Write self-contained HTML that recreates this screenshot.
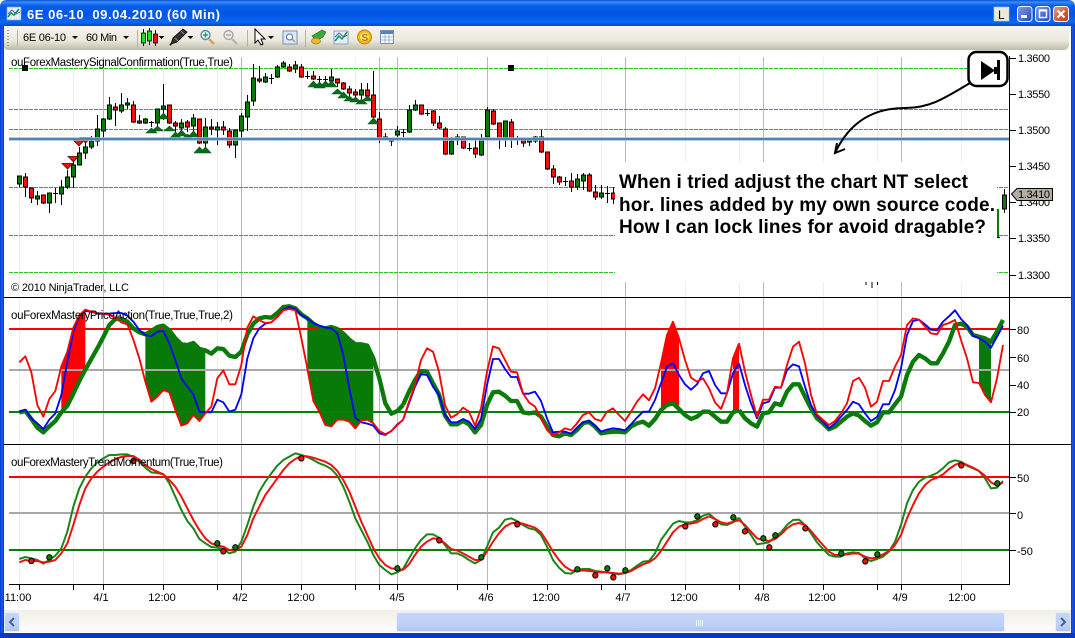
<!DOCTYPE html>
<html><head><meta charset="utf-8"><title>6E 06-10</title>
<style>html,body{margin:0;padding:0;background:#fff;width:1075px;height:638px;overflow:hidden}svg{display:block}
text{font-family:"Liberation Sans",Arial,sans-serif;font-size:11px;fill:#000}</style></head><body>
<svg width="1075" height="638" viewBox="0 0 1075 638" xmlns="http://www.w3.org/2000/svg">
<defs>
<linearGradient id="tb" x1="0" y1="0" x2="0" y2="1"><stop offset="0" stop-color="#0a50d0"/><stop offset=".08" stop-color="#3a8cf8"/><stop offset=".2" stop-color="#0a60ea"/><stop offset=".55" stop-color="#0055e5"/><stop offset=".85" stop-color="#0a68f4"/><stop offset="1" stop-color="#0046c8"/></linearGradient>
<linearGradient id="tl" x1="0" y1="0" x2="0" y2="1"><stop offset="0" stop-color="#f6f5ef"/><stop offset=".6" stop-color="#ebe9dd"/><stop offset="1" stop-color="#bfbcaa"/></linearGradient>
<linearGradient id="th" x1="0" y1="0" x2="0" y2="1"><stop offset="0" stop-color="#c6d6fa"/><stop offset=".7" stop-color="#bdd0f8"/><stop offset="1" stop-color="#a9c4f4"/></linearGradient>
<linearGradient id="sb" x1="0" y1="0" x2="0" y2="1"><stop offset="0" stop-color="#f1efe8"/><stop offset="1" stop-color="#fdfdfb"/></linearGradient>
<linearGradient id="wb" x1="0" y1="0" x2="1" y2="1"><stop offset="0" stop-color="#7f9ff0"/><stop offset="1" stop-color="#2447c0"/></linearGradient>
<linearGradient id="cl" x1="0" y1="0" x2="1" y2="1"><stop offset="0" stop-color="#eb9a80"/><stop offset="1" stop-color="#c0300c"/></linearGradient>
</defs>
<rect width="1075" height="638" fill="#fff"/>
<!-- window frame -->
<path d="M0 26V7Q0 0 7 0H1068Q1075 0 1075 7V26z" fill="url(#tb)"/>
<rect x="0" y="26" width="4" height="612" fill="#0b3fdc"/><rect x="1" y="26" width="2" height="612" fill="#1652ea"/>
<rect x="1071" y="26" width="4" height="612" fill="#0b3fdc"/><rect x="1072" y="26" width="2" height="612" fill="#1652ea"/>
<rect x="0" y="633" width="1075" height="5" fill="#0a37c4"/>
<!-- title -->
<rect x="7" y="7" width="14" height="13" fill="#e6eefc" stroke="#8aa2c8" stroke-width=".7"/>
<path d="M8 17L11 13L14 15L19 9" fill="none" stroke="#1c9a3c" stroke-width="1.6"/><path d="M8 14L12 10L16 14L20 12" fill="none" stroke="#3060c0" stroke-width=".9"/>
<text x="27" y="19" textLength="193" style="font-size:13px;font-weight:bold;fill:#fff" xml:space="preserve">6E 06-10  09.04.2010 (60 Min)</text>
<rect x="994" y="7" width="15" height="14" fill="#ece9d8" stroke="#b8c6e8" stroke-width=".6"/><text x="998" y="19" style="font-size:12px">L</text>
<rect x="1017.5" y="6.5" width="14.5" height="15" rx="3" fill="url(#wb)" stroke="#fff"/><rect x="1021" y="15" width="6" height="3" fill="#fff"/>
<rect x="1035.5" y="6.5" width="14.5" height="15" rx="3" fill="url(#wb)" stroke="#fff"/><rect x="1039.5" y="10" width="7" height="7.5" fill="none" stroke="#fff" stroke-width="1.4"/><rect x="1039" y="9.5" width="8" height="2" fill="#fff"/>
<rect x="1053.5" y="6.5" width="15" height="15" rx="3" fill="url(#cl)" stroke="#fff"/><path d="M1057.5 10.5l7 7m0-7l-7 7" stroke="#fff" stroke-width="2"/>
<!-- toolbar -->
<path d="M4 26H1069V44Q1069 50 1063 50H8Q4 50 4 46z" fill="url(#tl)"/>
<path d="M8 30v1m0 2v1m0 2v1m0 2v1m0 2v1m0 2v1" stroke="#a8a594" stroke-width="2"/>
<path d="M17.5 30V47M137.5 30V47M247.5 30V47M305.5 30V47" stroke="#b5b2a2"/>
<text x="23" y="41" textLength="43">6E 06-10</text>
<text x="86" y="41" textLength="31">60 Min</text>
<path d="M72 36h6l-3 3zM123 36h6l-3 3zM158.500 36h6l-3 3zM187.500 36h6l-3 3zM268 36h6l-3 3z" fill="#000"/>
<!-- candle icon -->
<path d="M143.500 29V46M149.500 28V45M155.500 30V46" stroke="#000"/>
<rect x="141.500" y="33" width="4" height="10" fill="#1ee01e" stroke="#000" stroke-width=".8"/><rect x="147.500" y="31" width="4" height="10" fill="#1ee01e" stroke="#000" stroke-width=".8"/><rect x="153.500" y="34" width="4" height="9" fill="#e81010" stroke="#000" stroke-width=".8"/>
<!-- pencil -->
<path d="M171 44L173 38L183 29L187 32L177 42z" fill="#333" stroke="#000" stroke-width=".8"/><path d="M175 38l3 3M181 31l3 3" stroke="#888"/><path d="M171 44l-1 1" stroke="#000" stroke-width="2"/>
<!-- zoom in / out -->
<circle cx="205.500" cy="35" r="4.500" fill="#dff0fa" stroke="#5a8ab0" stroke-width="1.400"/><path d="M203 35h5M205.500 32.500v5" stroke="#1a9a3a" stroke-width="1.300"/><path d="M209 39l5 5" stroke="#d8a050" stroke-width="2.500"/>
<circle cx="228.500" cy="35" r="4.500" fill="#e8e8e4" stroke="#a8a8a4" stroke-width="1.400"/><path d="M226 35h5" stroke="#a0a0a0" stroke-width="1.300"/><path d="M232 39l5 5" stroke="#b8b8b0" stroke-width="2.500"/>
<!-- cursor -->
<path d="M255 29V43L258 40L261 45L263 44L261 39H265z" fill="#fff" stroke="#000" stroke-width="1"/>
<!-- props -->
<rect x="283" y="31" width="14" height="13" fill="#dce8f8" stroke="#6f8fc0"/><circle cx="289.500" cy="37" r="3" fill="#fff" stroke="#4a6fa8"/><path d="M292 39l3 3" stroke="#d09040" stroke-width="1.500"/>
<!-- money -->
<path d="M312 36L322 30L326 32L323 37L316 41z" fill="#3aa83a" stroke="#1a6a1a" stroke-width=".6"/><ellipse cx="316" cy="41" rx="4.500" ry="3" fill="#e8b830" stroke="#a07810" stroke-width=".7"/>
<!-- chart -->
<rect x="334" y="31" width="14" height="13" fill="#e6eefc" stroke="#8aa2c8"/><path d="M335 41L339 36L342 39L347 32" fill="none" stroke="#1c9a3c" stroke-width="1.500"/><path d="M335 37L339 33L344 37L347 35" fill="none" stroke="#3060c0"/>
<!-- coin -->
<circle cx="364.500" cy="37" r="7" fill="#f0b818" stroke="#c08a08"/><circle cx="364.500" cy="37" r="4.500" fill="#fbe080"/><text x="361.500" y="41" style="font-size:10px;font-weight:bold;fill:#b07808">S</text>
<!-- table -->
<rect x="380.500" y="30.500" width="13" height="13" fill="#fff" stroke="#6f8fc0"/><rect x="381" y="31" width="12" height="3" fill="#5a80c8"/><path d="M381 37h12M381 40h12M385 34v9M389 34v9" stroke="#8aa2c8" stroke-width=".8"/>

<!-- gridlines -->
<g id="grid">
<path d="M19.500 57V584M73.500 57V584M163.500 57V584M217.500 57V584M301.500 57V584M355.500 57V584M457.500 57V584M547.500 57V584M601.500 57V584M685.500 57V584M739.500 57V584M823.500 57V584M877.500 57V584M961.500 57V584" stroke="#efeee6"/>
<path d="M103.500 57V584M241.500 57V584M379.500 57V584M397.500 57V584M487.500 57V584M625.500 57V584M763.500 57V584M901.500 57V584" stroke="#b8b8b8"/>
</g>
<!-- pane 1 lines -->
<path d="M9 68.500H1009M9 272.500H1009" stroke="#22c822" stroke-dasharray="4 1"/>
<path d="M9 109.500H1009M9 129.500H1009M9 187.500H1009M9 235.500H1009" stroke="#3c9c50" stroke-dasharray="4 1"/>
<!-- wicks -->
<path stroke="#000" fill="none" d="M19.500 176V187M25.500 173V197M31.500 188V203M37.500 191V205M43.500 195V204M49.500 193V213M55.500 188V203M61.500 180V205M67.500 170V189M73.500 160V188M79.500 147V165M85.500 140V159M91.500 136V149M97.500 115V146M103.500 118V139M109.500 97V120M115.500 103V126M121.500 93V113M127.500 98V109M133.500 101V123M139.500 115V124M145.500 118V124M151.500 121V127M157.500 109V130M163.500 84V120M169.500 105V124M175.500 121V132M181.500 119V135M187.500 120V132M193.500 114V135M199.500 119V144M205.500 118V147M211.500 119V135M217.500 122V145M223.500 121V135M229.500 128V148M235.500 130V158M241.500 113V138M247.500 95V131M253.500 64V106M259.500 66V83M265.500 73V83M271.500 74V84M277.500 65V78M283.500 61V68M289.500 64V72M295.500 61V73M301.500 64V78M307.500 71V79M313.500 71V80M319.500 76V83M325.500 76V85M331.500 69V82M337.500 79V87M343.500 82V90M349.500 86V97M355.500 89V98M361.500 83V100M367.500 83V100M373.500 71V118M379.500 112V143M385.500 133V140M391.500 138V146M397.500 126V137M403.500 129V137M409.500 105V133M415.500 100V111M421.500 105V115M427.500 109V116M433.500 110V126M439.500 116V129M445.500 127V155M451.500 137V155M457.500 134V145M463.500 137V149M469.500 143V151M475.500 139V158M481.500 134V156M487.500 107V138M493.500 109V125M499.500 123V149M505.500 121V147M511.500 119V148M517.500 136V145M523.500 140V147M529.500 139V146M535.500 136V143M541.500 130V153M547.500 152V170M553.500 165V184M559.500 176V185M565.500 177V186M571.500 173V192M577.500 174V190M583.500 173V190M589.500 173V192M595.500 185V200M601.500 185V199M607.500 186V203M613.500 187V204M1004.500 189V213"/>
<!-- dojis -->
<path stroke="#000" fill="none" d="M53 193.500h5M149 122.500h5M269 78.500h5M305 76.500h5M317 79.500h5M323 79.500h5M401 132.500h5M425 113.500h5M467 148.500h5M515 139.500h5M563 181.500h5M605 193.500h5"/>
<!-- green bodies -->
<path stroke="#000" fill="#0a7a0a" d="M17.500 176h4v8h-4zM35.500 196h4v3h-4zM47.500 193h4v10h-4zM59.500 187h4v7h-4zM65.500 177h4v10h-4zM71.500 165h4v12h-4zM77.500 153h4v12h-4zM83.500 147h4v6h-4zM89.500 141h4v6h-4zM95.500 129h4v12h-4zM101.500 119h4v12h-4zM107.500 105h4v14h-4zM119.500 105h4v6h-4zM125.500 103h4v2h-4zM143.500 119h4v4h-4zM155.500 109h4v14h-4zM161.500 106h4v3h-4zM179.500 123h4v5h-4zM191.500 118h4v8h-4zM203.500 127h4v16h-4zM215.500 127h4v3h-4zM233.500 130h4v15h-4zM239.500 116h4v15h-4zM245.500 102h4v15h-4zM251.500 78h4v23h-4zM263.500 77h4v5h-4zM275.500 67h4v10h-4zM281.500 63h4v4h-4zM293.500 65h4v4h-4zM329.500 77h4v4h-4zM359.500 90h4v5h-4zM383.500 137h4v2h-4zM395.500 131h4v4h-4zM407.500 110h4v22h-4zM413.500 105h4v5h-4zM449.500 141h4v13h-4zM455.500 137h4v3h-4zM479.500 139h4v16h-4zM485.500 110h4v27h-4zM503.500 121h4v17h-4zM527.500 139h4v3h-4zM533.500 137h4v4h-4zM575.500 179h4v8h-4zM581.500 175h4v6h-4zM599.500 193h4v4h-4zM1002.500 195h4v14h-4z"/>
<!-- red bodies -->
<path stroke="#000" fill="#f01010" d="M23.500 177h4v10h-4zM29.500 188h4v10h-4zM41.500 195h4v8h-4zM113.500 107h4v3h-4zM131.500 105h4v17h-4zM137.500 121h4v2h-4zM167.500 105h4v18h-4zM173.500 123h4v3h-4zM185.500 122h4v5h-4zM197.500 119h4v24h-4zM209.500 127h4v2h-4zM221.500 127h4v3h-4zM227.500 131h4v14h-4zM257.500 79h4v2h-4zM287.500 67h4v4h-4zM299.500 67h4v10h-4zM311.500 76h4v3h-4zM335.500 79h4v4h-4zM341.500 83h4v6h-4zM347.500 89h4v4h-4zM353.500 92h4v3h-4zM365.500 90h4v6h-4zM371.500 95h4v22h-4zM377.500 119h4v19h-4zM389.500 139h4v2h-4zM419.500 105h4v9h-4zM431.500 111h4v12h-4zM437.500 123h4v5h-4zM443.500 129h4v25h-4zM461.500 137h4v11h-4zM473.500 148h4v6h-4zM491.500 111h4v13h-4zM497.500 123h4v16h-4zM509.500 122h4v16h-4zM521.500 140h4v3h-4zM539.500 137h4v15h-4zM545.500 152h4v17h-4zM551.500 169h4v8h-4zM557.500 177h4v5h-4zM569.500 181h4v6h-4zM587.500 175h4v16h-4zM593.500 192h4v5h-4zM611.500 193h4v6h-4z"/>
<!-- triangles -->
<path fill="#0a6e0a" stroke="#053" stroke-width=".6" d="M146 133L151.500 128L157 133zM152 131L157.500 126L163 131zM158 119L163.500 113L169 119zM164 131L169.500 126L175 131zM170 138L175.500 132L181 138zM176 136L181.500 130L187 136zM182 139L187.500 134L193 139zM188 137L193.500 131L199 137zM194 153L199.500 147L205 153zM200 153L205.500 147L211 153zM308 87L313.500 81L319 87zM314 88L319.500 82L325 88zM320 87L325.500 81L331 87zM326 87L331.500 81L337 87zM332 94L337.500 89L343 94zM338 98L343.500 92L349 98zM344 101L349.500 96L355 101zM350 102L355.500 97L361 102zM356 104L361.500 99L367 104zM362 101L367.500 96L373 101zM368 124L373.500 118L379 124z"/>
<path fill="#f01010" stroke="#300" stroke-width=".7" d="M73.500 140.500H84L79 146zM80 137.500H91L85.500 143zM68 156.500H78.500L73.500 162zM62 163.500H73L67.500 169z"/>
<rect x="22" y="65" width="6" height="6" fill="#000"/><rect x="508" y="65" width="6" height="6" fill="#000"/>
<!-- blue line -->
<rect x="9" y="137" width="1000" height="4" fill="#a6c2de" opacity=".75"/><rect x="9" y="138" width="1000" height="2" fill="#4a80b4" opacity=".95"/>
<!-- white box -->
<rect x="615" y="162" width="382" height="120" fill="#fff"/>
<path d="M866 282v3M872 282v6M877.500 282v3" stroke="#000"/>
<rect x="997" y="209" width="2" height="28" fill="#0a7a0a"/><path d="M997 237.500h3" stroke="#000"/>
<text x="619" y="188" textLength="349" style="font-size:19px;font-weight:bold">When i tried adjust the chart NT select</text>
<text x="619" y="211" textLength="376" style="font-size:19px;font-weight:bold">hor. lines added by my own source code.</text>
<text x="619" y="233" textLength="367" style="font-size:19px;font-weight:bold">How I can lock lines for avoid dragable?</text>
<!-- annotation -->
<path d="M970 83C945 98 930 108 905 108C870 108 848 125 835 153" fill="none" stroke="#000" stroke-width="2"/>
<path d="M837 143L835 153L845 149" fill="none" stroke="#000" stroke-width="2"/>
<rect x="968.500" y="52" width="39" height="34" rx="8" fill="#fff" stroke="#000" stroke-width="2.500"/>
<path d="M981 61V80L995 70.500z" fill="#000"/><rect x="994" y="67" width="3" height="7" fill="#000"/><rect x="997" y="60" width="3" height="20" fill="#000"/>

<!-- pane 2 fills -->
<g transform="translate(0 295) scale(.33333)" stroke-linejoin="round" fill="none">
<polygon fill="#f00" points="184,214 202,170 220,98 238,60 256,44 256,224 238,258 220,296 202,332 184,352"/>
<polygon fill="#077a07" points="436,118 454,108 472,96 490,92 508,106 526,130 544,148 562,150 580,144 598,162 616,166 616,355 598,378 580,360 562,385 544,392 526,345 508,292 490,285 472,305 454,320 436,260"/>
<polygon fill="#077a07" points="922,70 940,86 958,96 976,100 994,96 1012,102 1030,116 1048,134 1066,148 1084,148 1102,152 1120,190 1120,385 1102,374 1084,376 1066,400 1048,380 1030,374 1012,374 994,394 976,390 958,350 940,318 922,220"/>
</g>
<g transform="translate(400 295) scale(.33333)">
<polygon fill="#f00" points="783,205 801,120 819,78 837,130 837,342 819,325 801,330 783,345"/>
<polygon fill="#f00" points="999,190 1017,145 1017,345 999,352"/>
</g>
<g transform="translate(740 295) scale(.33333)">
<polygon fill="#077a07" points="717,125 735,130 753,140 753,322 735,300 717,264"/>
</g>
<!-- pane 2 h lines -->
<rect x="9" y="328" width="1000" height="2" fill="#f00"/><rect x="9" y="369" width="1000" height="2" fill="#a8a8a8"/><rect x="9" y="411" width="1000" height="2" fill="#078007"/>
<!-- pane 2 lines -->
<g transform="translate(0 295) scale(.33333)" fill="none" stroke-linejoin="round">
<polyline stroke="#0a7a0a" stroke-width="13" points="58,352 76,348 94,372 112,398 130,412 148,394 166,378 184,352 202,332 220,296 238,258 256,224 274,192 292,160 310,126 328,90 346,72 364,72 382,80 400,100 418,112 436,118 454,108 472,96 490,92 508,106 526,130 544,148 562,150 580,144 598,162 616,166 634,176 652,160 670,162 688,182 706,186 724,170 742,118 760,86 778,70 796,66 814,68 832,54 850,36 868,34 886,40 904,58 922,70 940,86 958,96 976,100 994,96 1012,102 1030,116 1048,134 1066,148 1084,148 1102,152 1120,190 1138,250 1156,325 1174,356 1192,348 1209,330"/>
<polyline stroke="#00f" stroke-width="5.500" points="58,350 76,344 94,370 112,385 130,402 148,374 166,355 184,300 202,200 220,110 238,62 256,48 274,50 292,56 310,56 328,56 346,54 364,54 382,62 400,80 418,105 436,120 454,124 472,110 490,108 508,145 526,195 544,250 562,275 580,298 598,350 616,352 634,352 652,314 670,322 688,350 706,344 724,298 742,190 760,130 778,100 796,86 814,82 832,66 850,44 868,36 886,42 904,60 922,70 940,85 958,92 976,98 994,100 1012,115 1030,180 1048,280 1066,368 1084,382 1102,386 1120,392 1138,415 1156,420 1174,408 1192,388 1209,375"/>
<polyline stroke="#f00" stroke-width="5.500" points="58,202 76,184 94,232 112,330 130,365 148,312 166,288 184,214 202,170 220,98 238,60 256,44 274,50 292,54 310,56 328,60 346,68 364,82 382,88 400,134 418,190 436,260 454,320 472,305 490,285 508,292 526,345 544,392 562,385 580,360 598,378 616,355 634,335 652,250 670,226 688,268 706,268 724,210 742,98 760,64 778,76 796,84 814,82 832,66 850,46 868,42 886,46 904,130 922,220 940,318 958,350 976,390 994,394 1012,374 1030,374 1048,380 1066,400 1084,376 1102,374 1120,385 1138,408 1156,418 1174,408 1192,390 1209,375"/>
</g>
<g transform="translate(400 295) scale(.33333)" fill="none" stroke-linejoin="round">
<polyline stroke="#0a7a0a" stroke-width="13" points="9,330 27,290 45,255 63,228 81,230 99,265 117,298 135,362 153,388 171,388 189,378 207,388 225,412 243,390 261,330 279,292 297,290 315,302 333,318 351,318 369,352 387,355 405,352 423,365 441,395 459,420 477,424 495,415 513,420 531,405 549,385 567,380 585,395 603,415 621,412 639,410 657,410 675,412 693,395 711,385 729,380 747,392 765,372 783,345 801,330 819,325 837,342 855,360 873,372 891,365 909,350 927,350 945,365 963,380 981,380 999,352 1017,345"/>
<polyline stroke="#00f" stroke-width="5.500" points="9,375 27,325 45,275 63,238 81,240 99,275 117,300 135,360 153,382 171,382 189,372 207,380 225,402 243,372 261,270 279,192 297,192 315,222 333,246 351,246 369,296 387,296 405,290 423,318 441,370 459,412 477,410 495,410 513,416 531,398 549,382 567,378 585,392 603,410 621,404 639,400 657,402 675,406 693,388 711,368 729,350 747,350 765,315 783,265 801,215 819,205 837,240 855,268 873,284 891,268 909,235 927,228 945,270 963,295 981,295 999,235 1017,205"/>
<polyline stroke="#f00" stroke-width="5.500" points="9,375 27,320 45,270 63,195 81,160 99,170 117,230 135,330 153,368 171,358 189,338 207,350 225,392 243,340 261,230 279,154 297,160 315,195 333,230 351,232 369,295 387,322 405,335 423,370 441,405 459,422 477,412 495,400 513,405 531,385 549,360 567,352 585,372 603,378 621,350 639,340 657,360 675,378 693,350 711,320 729,298 747,316 765,280 783,205 801,120 819,80 837,130 855,195 873,248 891,260 909,250 927,280 945,322 963,342 981,295 999,190 1017,145"/>
</g>
<g transform="translate(740 295) scale(.33333)" fill="none" stroke-linejoin="round">
<polyline stroke="#0a7a0a" stroke-width="13" points="-3,345 15,370 33,385 51,395 69,355 87,352 105,325 123,330 141,290 159,268 177,268 195,305 213,340 231,370 249,385 267,403 285,395 303,380 321,365 339,355 357,362 375,378 393,392 411,382 429,352 447,352 465,328 483,305 501,240 519,200 537,180 555,190 573,205 591,205 609,175 627,140 645,90 663,86 681,95 699,120 717,125 735,130 753,140 771,110 789,75"/>
<polyline stroke="#00f" stroke-width="5.500" points="-3,205 15,270 33,325 51,370 69,325 87,320 105,278 123,278 141,225 159,208 177,214 195,275 213,330 231,362 249,380 267,400 285,385 303,365 321,345 339,320 357,328 375,355 393,378 411,366 429,328 447,328 465,285 483,220 501,120 519,78 537,74 555,88 573,104 591,106 609,80 627,64 645,46 663,72 681,90 699,122 717,130 735,140 753,158 771,125 789,92"/>
<polyline stroke="#f00" stroke-width="5.500" points="-3,145 15,230 33,300 51,365 69,314 87,314 105,275 123,278 141,210 159,155 177,140 195,205 213,300 231,358 249,375 267,390 285,378 303,355 321,325 339,258 357,248 375,278 393,335 411,320 429,258 447,258 465,215 483,180 501,90 519,70 537,74 555,95 573,115 591,118 609,90 627,84 645,75 663,135 681,190 699,262 717,264 735,300 753,322 771,250 789,150"/>
</g>

<!-- pane 3 h lines -->
<rect x="9" y="476" width="1000" height="2" fill="#f00"/><rect x="9" y="512" width="1000" height="2" fill="#a8a8a8"/><rect x="9" y="549" width="1000" height="2" fill="#078007"/>
<g transform="translate(0 445) scale(.33333)" fill="none" stroke-linejoin="round" stroke-width="6">
<polyline stroke="#1a851a" points="58,342 76,336 94,340 112,345 130,356 148,345 166,332 184,310 202,260 220,185 238,130 256,95 274,70 292,52 310,40 328,30 346,30 364,28 382,28 400,36 418,50 436,68 454,82 472,84 490,88 508,115 526,155 544,195 562,228 580,250 598,282 616,295 634,306 652,308 670,312 688,325 706,320 724,290 742,240 760,185 778,140 796,110 814,85 832,62 850,45 868,35 886,25 904,30 922,36 940,45 958,55 976,62 994,72 1012,92 1030,125 1048,170 1066,220 1084,255 1102,290 1120,330 1138,360 1156,375 1174,388 1192,382 1209,372"/>
<polyline stroke="#f01010" points="58,352 76,345 94,348 112,348 130,352 148,350 166,345 184,325 202,295 220,240 238,180 256,130 274,100 292,80 310,65 328,52 346,42 364,36 382,33 400,33 418,44 436,60 454,72 472,80 490,88 508,105 526,125 544,155 562,190 580,225 598,255 616,280 634,295 652,302 670,305 688,315 706,316 724,305 742,270 760,220 778,185 796,150 814,125 832,100 850,75 868,55 886,42 904,33 922,34 940,38 958,44 976,50 994,60 1012,78 1030,105 1048,140 1066,185 1084,230 1102,270 1120,310 1138,340 1156,360 1174,370 1192,372 1209,375"/>
<g stroke="#000" stroke-width="3"><g fill="#f01010"><circle cx="94" cy="348" r="8"/><circle cx="670" cy="319" r="8"/><circle cx="904" cy="40" r="8"/><circle cx="400" cy="48" r="8"/></g><g fill="#0a7a0a"><circle cx="148" cy="337" r="8"/><circle cx="652" cy="295" r="8"/><circle cx="706" cy="307" r="8"/><circle cx="1192" cy="370" r="8"/></g></g>
</g>
<g transform="translate(400 445) scale(.33333)" fill="none" stroke-linejoin="round" stroke-width="6">
<polyline stroke="#1a851a" points="9,372 27,340 45,310 63,285 81,268 99,268 117,278 135,300 153,325 171,325 189,333 207,345 225,355 243,345 261,305 279,262 297,248 315,224 333,220 351,228 369,240 387,250 405,254 423,270 441,305 459,345 477,368 495,384 513,386 531,375 549,372 567,372 585,378 603,380 621,382 639,386 657,388 675,384 693,375 711,362 729,350 747,348 765,325 783,285 801,260 819,236 837,228 855,232 873,232 891,226 909,212 927,206 945,222 963,238 981,240 999,232 1017,218"/>
<polyline stroke="#f01010" points="9,375 27,358 45,330 63,305 81,290 99,280 117,282 135,295 153,312 171,316 189,325 207,335 225,345 243,345 261,320 279,290 297,265 315,245 333,235 351,232 369,236 387,242 405,248 423,262 441,290 459,320 477,345 495,365 513,376 531,378 549,376 567,378 585,380 603,382 621,382 639,384 657,386 675,384 693,378 711,368 729,358 747,352 765,340 783,318 801,290 819,262 837,245 855,238 873,236 891,232 909,222 927,214 945,222 963,232 981,236 999,230 1017,226"/>
<g stroke="#000" stroke-width="3"><g fill="#f01010"><circle cx="118" cy="286" r="8"/><circle cx="352" cy="238" r="8"/><circle cx="586" cy="391" r="8"/><circle cx="640" cy="397" r="8"/><circle cx="856" cy="244" r="8"/><circle cx="946" cy="238" r="8"/></g><g fill="#0a7a0a"><circle cx="244" cy="337" r="8"/><circle cx="532" cy="373" r="8"/><circle cx="622" cy="370" r="8"/><circle cx="676" cy="376" r="8"/><circle cx="892" cy="214" r="8"/><circle cx="1000" cy="217" r="8"/></g></g>
</g>
<g transform="translate(740 445) scale(.33333)" fill="none" stroke-linejoin="round" stroke-width="6">
<polyline stroke="#1a851a" points="-3,218 15,245 33,270 51,298 69,295 87,292 105,275 123,262 141,240 159,225 177,224 195,240 213,265 231,292 249,312 267,330 285,335 303,335 321,325 339,322 357,324 375,340 393,348 411,342 429,335 447,320 465,290 483,240 501,175 519,135 537,110 555,98 573,92 591,84 609,70 627,52 645,46 663,50 681,62 699,70 717,78 735,100 753,130 771,128 789,108"/>
<polyline stroke="#f01010" points="-3,225 15,240 33,260 51,280 69,285 87,288 105,282 123,268 141,250 159,238 177,234 195,240 213,258 231,280 249,300 267,320 285,330 303,330 321,328 339,325 357,326 375,335 393,340 411,338 429,328 447,318 465,300 483,270 501,220 519,180 537,145 555,120 573,105 591,98 609,88 627,72 645,60 663,52 681,60 699,68 717,78 735,92 753,112 771,122 789,112"/>
<g stroke="#000" stroke-width="3"><g fill="#f01010"><circle cx="15" cy="259" r="8"/><circle cx="88" cy="307" r="8"/><circle cx="196" cy="250" r="8"/><circle cx="376" cy="349" r="8"/><circle cx="664" cy="61" r="8"/></g><g fill="#0a7a0a"><circle cx="70" cy="280" r="8"/><circle cx="106" cy="271" r="8"/><circle cx="304" cy="325" r="8"/><circle cx="412" cy="328" r="8"/><circle cx="772" cy="115" r="8"/></g></g>
</g>

<!-- separators and axes -->
<path d="M4 297.500H1071M4 444.500H1071M9 584.500H1009M1009.500 56V585" stroke="#000" fill="none"/>
<path d="M19.500 584v6M73.500 584v6M103.500 584v6M163.500 584v6M217.500 584v6M241.500 584v6M301.500 584v6M355.500 584v6M379.500 584v6M397.500 584v6M457.500 584v6M487.500 584v6M547.500 584v6M601.500 584v6M625.500 584v6M685.500 584v6M739.500 584v6M763.500 584v6M823.500 584v6M877.500 584v6M901.500 584v6M961.500 584v6" stroke="#000"/>
<path d="M1009 58.500h7M1009 94.500h7M1009 130.500h7M1009 166.500h7M1009 202.500h7M1009 238.500h7M1009 275.500h7M1009 329.500h7M1009 357.500h7M1009 385.500h7M1009 412.500h7M1009 477.500h7M1009 513.500h7M1009 550.500h7" stroke="#000"/>
<!-- axis labels -->
<g>
<text x="1018" y="62" textLength="32">1.3600</text><text x="1018" y="98" textLength="32">1.3550</text><text x="1018" y="134" textLength="32">1.3500</text><text x="1018" y="170" textLength="32">1.3450</text><text x="1018" y="206" textLength="32">1.3400</text><text x="1018" y="242" textLength="32">1.3350</text><text x="1018" y="279" textLength="32">1.3300</text>
<text x="1017" y="334">80</text><text x="1017" y="362">60</text><text x="1017" y="389">40</text><text x="1017" y="416">20</text>
<text x="1017" y="482">50</text><text x="1017" y="519">0</text><text x="1017" y="555">-50</text>
</g>
<path d="M1011.500 194L1017 188.500H1052.500V200.500H1017z" fill="#b3aea0" stroke="#000"/><text x="1018" y="198" textLength="32">1.3410</text>
<text x="18" y="601" text-anchor="middle">11:00</text><text x="101" y="601" text-anchor="middle">4/1</text><text x="162" y="601" text-anchor="middle">12:00</text><text x="240" y="601" text-anchor="middle">4/2</text><text x="301" y="601" text-anchor="middle">12:00</text><text x="397" y="601" text-anchor="middle">4/5</text><text x="486" y="601" text-anchor="middle">4/6</text><text x="546" y="601" text-anchor="middle">12:00</text><text x="623" y="601" text-anchor="middle">4/7</text><text x="684" y="601" text-anchor="middle">12:00</text><text x="762" y="601" text-anchor="middle">4/8</text><text x="822" y="601" text-anchor="middle">12:00</text><text x="900" y="601" text-anchor="middle">4/9</text><text x="962" y="601" text-anchor="middle">12:00</text>
<!-- pane labels -->
<text x="11" y="66" textLength="222" style="font-size:11.5px">ouForexMasterySignalConfirmation(True,True)</text>
<text x="11" y="291" textLength="118">© 2010 NinjaTrader, LLC</text>
<text x="11" y="319" textLength="222" style="font-size:11.5px">ouForexMasteryPriceAction(True,True,True,2)</text>
<text x="11" y="466" textLength="212" style="font-size:11.5px">ouForexMasteryTrendMomentum(True,True)</text>
<!-- scrollbar -->
<rect x="4" y="610" width="1067" height="23" fill="url(#sb)"/>
<rect x="4.500" y="612.500" width="15" height="19" rx="2" fill="url(#th)" stroke="#e8eefc"/><path d="M14 618l-4 4 4 4" fill="none" stroke="#4d6185" stroke-width="2"/>
<rect x="1055.500" y="612.500" width="15" height="19" rx="2" fill="url(#th)" stroke="#e8eefc"/><path d="M1061 618l4 4-4 4" fill="none" stroke="#4d6185" stroke-width="2"/>
<rect x="396.500" y="612.500" width="608" height="19" rx="2" fill="url(#th)" stroke="#e8eefc"/>
<path d="M696.500 620v6M698.500 620v6M700.500 620v6M702.500 620v6" stroke="#eef3fe"/>
</svg>
</body></html>
